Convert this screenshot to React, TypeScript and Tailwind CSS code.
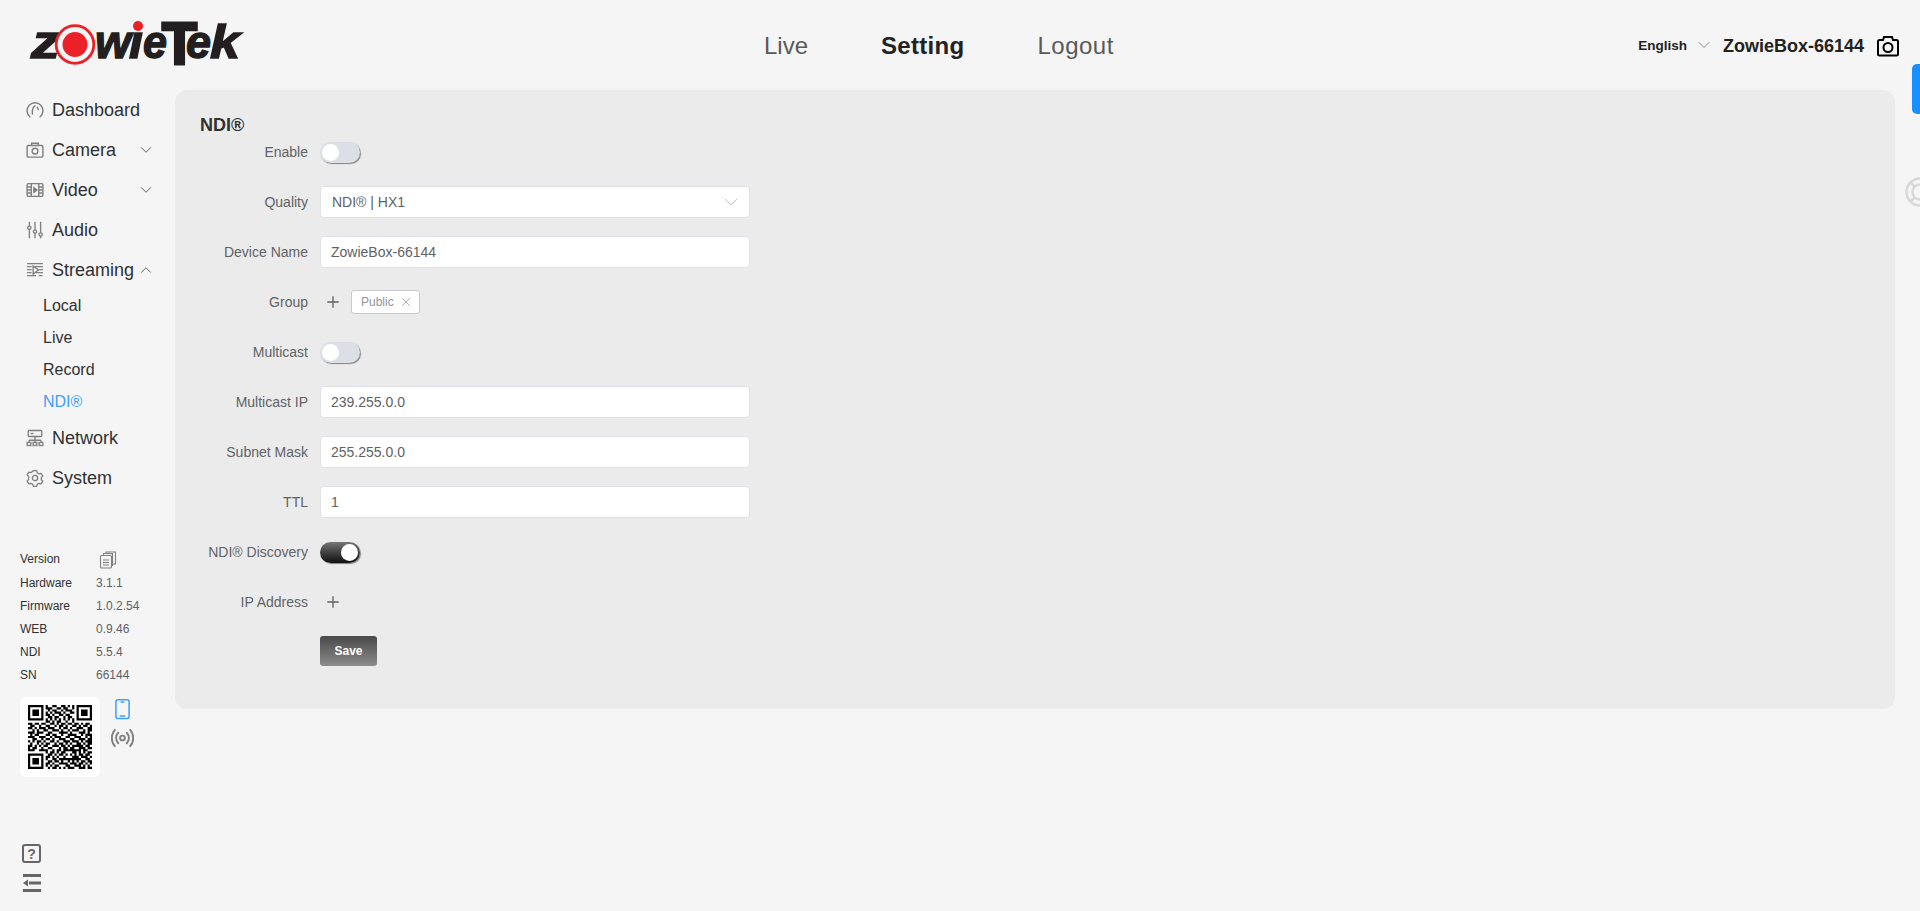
import React from 'react';
import { ChevronDown, ChevronUp, Plus, X } from 'lucide-react';

const font = "font-['Liberation_Sans',Arial,sans-serif]";

// sidebar icons, all drawn on a 24 box like the originals
const IconGauge = () => (
  <svg viewBox="0 0 24 24" className="w-[18px] h-[18px]" fill="none" stroke="#808080" strokeWidth="1.9" strokeLinecap="round">
    <path d="M5.2 21A10.6 10.6 0 1 1 18.8 21" />
    <path d="M8.5 17.5C8 12.5 9 8.5 12 6.5" />
    <path d="M15 8.500c.7 1 1.200 2 1.500 3" />
  </svg>
);
const IconCamera = () => (
  <svg viewBox="0 0 24 24" className="w-[18px] h-[18px]" fill="none" stroke="#808080" strokeWidth="1.9">
    <rect x="1.500" y="6" width="21" height="15.500" rx="1.500" />
    <path d="M7.500 6V3h9v3" />
    <circle cx="12" cy="13.500" r="3.800" />
  </svg>
);
const IconFilm = () => (
  <svg viewBox="0 0 24 24" className="w-[18px] h-[18px]" fill="none" stroke="#808080" strokeWidth="1.900">
    <rect x="1.500" y="3.500" width="21" height="17" rx="1.500" />
    <path d="M7 3.500v17M17 3.500v17M1.500 8h5.500M1.500 12h5.500M1.500 16h5.500M17 8h5.500M17 12h5.500M17 16h5.500" />
    <path d="M10.500 9v6l4-3z" fill="#808080" />
  </svg>
);
const IconSliders = () => (
  <svg viewBox="0 0 24 24" className="w-[18px] h-[18px]" fill="none" stroke="#808080" strokeWidth="1.800">
    <path d="M4.500 1v6M4.500 11v12M12 1v11M12 16v7M19.500 1v15M19.500 20v3" />
    <circle cx="4.500" cy="9" r="2.200" />
    <circle cx="12" cy="14" r="2.200" />
    <circle cx="19.500" cy="18" r="2.200" />
  </svg>
);
const IconStream = () => (
  <svg viewBox="0 0 24 24" className="w-[18px] h-[18px]" fill="none" stroke="#808080" strokeWidth="1.800">
    <path d="M1.500 3.500h21M1.500 7.500h6M12 7.500h10.500M1.500 11.500h6M17 11.500h5.500M1.500 15.500h6M13 15.500h9.500M1.500 19.500h12M17 19.500h5" />
    <path d="M9.500 6.500v11l7-5.500z" />
  </svg>
);
const IconNetwork = () => (
  <svg viewBox="0 0 24 24" className="w-[18px] h-[18px]" fill="none" stroke="#808080" strokeWidth="1.800">
    <rect x="3" y="2" width="18" height="8" rx="1" />
    <path d="M6 6h4" />
    <path d="M12 10v5M4 15h16M4 15v3M20 15v3M12 15v3" />
    <rect x="1.500" y="18" width="5" height="4" />
    <rect x="9.500" y="18" width="5" height="4" />
    <rect x="17.500" y="18" width="5" height="4" />
  </svg>
);
const IconGear = () => (
  <svg viewBox="0 0 24 24" className="w-[18px] h-[18px]" fill="none" stroke="#808080" strokeWidth="1.900" strokeLinejoin="round">
    <path d="M9.500 2h5l.8 3 2.800 1.600 3-.8 2.400 4.200-2.200 2.200v3.200l2.200 1.800-2.400 4.200-3-.8-2.800 1.600-.8 3h-5l-.8-3-2.800-1.600-3 .8L.3 17.200l2.200-2V10L.3 8.200 2.700 4l3 .8 3-1.800z" transform="translate(1.200 0.500) scale(0.9)" />
    <circle cx="12" cy="12" r="3.500" />
  </svg>
);

type NavItem = { label: string; icon: React.ReactNode; arrow?: 'down' | 'up' };

const NavRow = ({ label, icon, arrow }: NavItem) => (
  <div className="h-10 flex items-center pl-[26px] text-[18px] text-[#303133]">
    <span className="w-[26px] shrink-0 flex">{icon}</span>
    <span>{label}</span>
    {arrow === 'down' && <ChevronDown className="w-[18px] h-[18px] text-[#555] ml-auto mr-5" strokeWidth={1.2} />}
    {arrow === 'up' && <ChevronUp className="w-[18px] h-[18px] text-[#555] ml-auto mr-5" strokeWidth={1.2} />}
  </div>
);

const versions = [
  ['Hardware', '3.1.1'],
  ['Firmware', '1.0.2.54'],
  ['WEB', '0.9.46'],
  ['NDI', '5.5.4'],
  ['SN', '66144'],
];

// rough copy of the code in the picture, 29 x 29
const qrRows = [
  '11111110100110011010101111111',
  '10000010111001101100101000001',
  '10111010010110010111001011101',
  '10111010101011101001101011101',
  '10111010110100110110001011101',
  '10000010011011001011001000001',
  '11111110101010101010101111111',
  '00000000110101100100100000000',
  '11011011001101011011011010110',
  '01100100110010110100110101101',
  '11010111011100101101001110011',
  '00101001100111010010111001011',
  '11101110011000111101000111010',
  '01011000110110010011110010111',
  '11100111001011100110011100101',
  '00110010110100111001100111011',
  '10101101001101001110111010111',
  '01001010110010110101001101011',
  '11010101100111011010111110110',
  '10110010011000101101100111011',
  '11100111100101101111111101100',
  '00000000101101011000110101011',
  '11111110011010110101010110110',
  '10000010110101001000111011101',
  '10111010100110111111111100110',
  '10111010011011010010101011011',
  '10111010110100111101110110101',
  '10000010101011000110011101010',
  '11111110010110101011100111011',
];

const qrPath = qrRows
  .map((row, y) =>
    row
      .split('')
      .map((c, x) => (c === '1' ? `M${x} ${y}h1v1h-1z` : ''))
      .join('')
  )
  .join('');

const QrCode = () => (
  <svg viewBox="0 0 29 29" className="w-16 h-16">
    <path d={qrPath} fill="#000" />
  </svg>
);

const Switch = ({ on }: { on?: boolean }) => (
  <span
    className={`w-10 h-[21px] rounded-full flex items-center px-[2px] shadow-[1px_1px_1px_rgba(0,0,0,0.45)] ${
      on ? 'justify-end bg-gradient-to-b from-[#777] to-[#111]' : 'bg-[#dcdfe6]'
    }`}
  >
    <span className="w-[17px] h-[17px] rounded-full bg-white" />
  </span>
);

const TextBox = ({ value }: { value: string }) => (
  <div className="w-[430px] h-8 bg-white border border-[#e0e2e8] rounded flex items-center pl-[10px] text-sm text-[#606266]">{value}</div>
);

const FormRow = ({ label, children }: { label?: string; children: React.ReactNode }) => (
  <div className="h-8 mb-[18px] flex items-center">
    <label className="w-[145px] shrink-0 text-right text-sm text-[#606266] pr-[12px]">{label}</label>
    <div className="flex items-center">{children}</div>
  </div>
);

const logoLetter = {
  fill: '#231f20',
  stroke: '#231f20',
  strokeWidth: 1.4,
  fontSize: 47,
  fontFamily: "'Liberation Sans',Arial,sans-serif",
  fontWeight: 700,
  fontStyle: 'italic',
  lengthAdjust: 'spacingAndGlyphs',
} as const;

// wordmark: real letters, each stretched to the logo's proportions
const Logo = () => (
  <svg viewBox="0 0 210 46" className="w-[210px] h-[46px] overflow-visible">
    <text {...logoLetter} x="0" y="38" textLength="29">z</text>
    <text {...logoLetter} x="64" y="38" textLength="36">w</text>
    <text {...logoLetter} x="98" y="38" textLength="14">ı</text>
    <text {...logoLetter} x="112" y="38" textLength="24">e</text>
    <text {...logoLetter} x="131" y="44" fontSize="60" fontStyle="normal" strokeWidth="3" textLength="35">T</text>
    <text {...logoLetter} x="155" y="38" textLength="25">e</text>
    <text {...logoLetter} x="179" y="38" textLength="30">k</text>
    <circle cx="44" cy="24.500" r="18.800" fill="#f5f5f5" stroke="#ec2027" strokeWidth="2.800" />
    <circle cx="44" cy="24.500" r="12.500" fill="#ec2027" />
    <circle cx="107" cy="6" r="5" fill="#ec2027" />
  </svg>
);

export default function App() {
  return (
    <div className={`relative h-[911px] w-[1920px] overflow-hidden bg-[#f5f5f5] ${font}`}>
      <header className="h-[90px] flex items-start">
        <div className="w-[764px] shrink-0 pl-[31px] pt-[20px]">
          <Logo />
        </div>
        <nav className="flex text-2xl text-[#595959] pt-[32px] leading-[28px]">
          <a>Live</a>
          <a className="ml-[73px] font-bold text-[#222] tracking-[0.3px]">Setting</a>
          <a className="ml-[73px] tracking-[0.5px]">Logout</a>
        </nav>
        <div className="ml-auto flex items-center pt-[32px] pr-[20px] font-bold text-[#222]">
          <span className="text-[13.5px]">English</span>
          <ChevronDown className="w-5 h-5 text-[#777] ml-[7px] mr-[9px] -mt-[3px]" strokeWidth={1} />
          <span className="text-lg mr-[12px]">ZowieBox-66144</span>
          <svg viewBox="0 0 24 24" className="w-6 h-6" fill="none" stroke="#000" strokeWidth="2">
            <path d="M2 7.500a1.500 1.500 0 0 1 1.500-1.500H7l1-3h8l1 3h3.500A1.500 1.500 0 0 1 22 7.500V20a1.500 1.500 0 0 1-1.500 1.500h-17A1.500 1.500 0 0 1 2 20z" />
            <circle cx="12" cy="13.500" r="4.500" />
          </svg>
        </div>
      </header>

      <div className="flex">
        <aside className="w-[175px] shrink-0 h-[821px] flex flex-col">
          <NavRow label="Dashboard" icon={<IconGauge />} />
          <NavRow label="Camera" icon={<IconCamera />} arrow="down" />
          <NavRow label="Video" icon={<IconFilm />} arrow="down" />
          <NavRow label="Audio" icon={<IconSliders />} />
          <NavRow label="Streaming" icon={<IconStream />} arrow="up" />
          <div className="pl-[43px] text-base text-[#303133]">
            <div className="h-8 leading-8">Local</div>
            <div className="h-8 leading-8">Live</div>
            <div className="h-8 leading-8">Record</div>
            <div className="h-8 leading-8 text-[#409eff]">NDI®</div>
          </div>
          <NavRow label="Network" icon={<IconNetwork />} />
          <NavRow label="System" icon={<IconGear />} />

          <div className="pl-[20px] mt-[50px] text-xs">
            <div className="h-[23px] flex items-center text-[#303133]">
              <span className="w-[79px] mb-[2px]">Version</span>
              <svg viewBox="0 0 18 18" className="w-[18px] h-[18px]" fill="none" stroke="#808080" strokeWidth="1.100">
                <rect x="1.500" y="4.500" width="11" height="12.500" rx="1" />
                <path d="M4.500 4.500V2.500h9v12h-1M7 2.500V1h9.500v12h-3" />
                <path d="M4 9h6M4 11.500h6M4 14h6" />
              </svg>
            </div>
            {versions.map(([k, v]) => (
              <div key={k} className="h-[23px] flex items-center">
                <span className="w-[76px] text-[#303133]">{k}</span>
                <span className="text-[#606266]">{v}</span>
              </div>
            ))}
            <div className="flex mt-[11px]">
              <div className="w-20 h-20 bg-white rounded-md flex items-center justify-center">
                <QrCode />
              </div>
              <div className="ml-[11px] flex flex-col items-center">
                <svg viewBox="0 0 16 22" className="w-[15px] h-[22px] mt-[1px]" fill="none" stroke="#409eff" strokeWidth="1.600">
                  <rect x="1" y="1" width="14" height="20" rx="2" />
                  <path d="M6 3.500h4M5 18.500h6" />
                </svg>
                <svg viewBox="0 0 24 20" className="w-[23px] h-[20px] mt-[8px]" fill="none" stroke="#808080" strokeWidth="2" strokeLinecap="round">
                  <circle cx="12" cy="10" r="2.500" />
                  <path d="M7.500 4.500a8 8 0 0 0 0 11M16.500 4.500a8 8 0 0 1 0 11M4 1.500a13 13 0 0 0 0 17M20 1.500a13 13 0 0 1 0 17" />
                </svg>
              </div>
            </div>
          </div>

          <div className="mt-auto pl-[22px] pb-[19px] flex flex-col">
            <div className="w-[19px] h-[19px] border-2 border-[#666] rounded-[3px] flex items-center justify-center text-[14px] font-bold text-[#666] leading-none">?</div>
            <svg viewBox="0 0 20 18" className="w-5 h-[18px] mt-[11px]" fill="#666">
              <rect x="1" y="0" width="18" height="3" />
              <rect x="7" y="7.500" width="12" height="3" />
              <rect x="1" y="15" width="18" height="3" />
              <path d="M1 9L6 5.500v7z" />
            </svg>
          </div>
        </aside>

        <main className="w-[1720px] h-[619px] bg-[#ebebeb] rounded-xl pt-[25px] text-sm">
          <h2 className="pl-[25px] text-lg font-bold text-[#303133] leading-5 mb-[1px]">NDI®</h2>
          <div>
            <FormRow label="Enable">
              <Switch />
            </FormRow>
            <FormRow label="Quality">
              <div className="w-[430px] h-8 bg-white border border-[#e0e2e8] rounded flex items-center justify-between pl-[11px] pr-[6px] text-sm text-[#606266]">
                <span>NDI® | HX1</span>
                <ChevronDown className="w-6 h-6 text-[#c0c4cc]" strokeWidth={1} />
              </div>
            </FormRow>
            <FormRow label="Device Name">
              <TextBox value="ZowieBox-66144" />
            </FormRow>
            <FormRow label="Group">
              <Plus className="w-[18px] h-[18px] text-[#606266] ml-[4px]" strokeWidth={1.8} />
              <span className="ml-[9px] h-6 w-[69px] bg-white border border-[#c8c9cc] rounded-[3px] flex items-center pl-[9px] text-xs text-[#909399]">
                Public
                <X className="w-3.5 h-3.5 ml-[5px]" strokeWidth={1.3} />
              </span>
            </FormRow>
            <FormRow label="Multicast">
              <Switch />
            </FormRow>
            <FormRow label="Multicast IP">
              <TextBox value="239.255.0.0" />
            </FormRow>
            <FormRow label="Subnet Mask">
              <TextBox value="255.255.0.0" />
            </FormRow>
            <FormRow label="TTL">
              <TextBox value="1" />
            </FormRow>
            <FormRow label="NDI® Discovery">
              <Switch on />
            </FormRow>
            <FormRow label="IP Address">
              <Plus className="w-[18px] h-[18px] text-[#606266] ml-[4px]" strokeWidth={1.8} />
            </FormRow>
            <FormRow>
              <button className="w-[57px] h-[30px] -mt-[2px] rounded-[3px] bg-gradient-to-b from-[#4a4a4a] to-[#8c8c8c] text-white text-xs font-bold">Save</button>
            </FormRow>
          </div>
        </main>
      </div>

      {/* floating bits clipped by the window edge */}
      <div className="absolute left-[1912px] top-[64px] w-5 h-[50px] rounded-[5px] bg-[#1890ff]" />
      <svg viewBox="0 0 30 30" className="absolute left-[1905px] top-[177px] w-[30px] h-[30px]" fill="none" stroke="#d9d9d9" strokeWidth="2.500">
        <circle cx="15" cy="15" r="13.500" />
        <circle cx="15" cy="15" r="7.500" />
        <path d="M5.500 5.500l4 4M5.500 24.500l4-4" />
      </svg>
    </div>
  );
}
